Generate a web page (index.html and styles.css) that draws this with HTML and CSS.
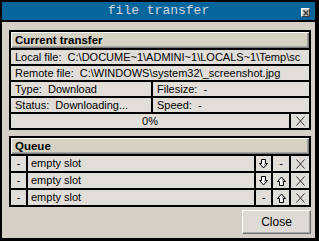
FILE: index.html
```html
<!DOCTYPE html>
<html>
<head>
<meta charset="utf-8">
<link rel="stylesheet" href="styles.css">
</head>
<body>
<div class="win">
  <div class="title">
    <span></span>
    <span class="title-text">file transfer</span>
    <span class="tclose"><svg width="6" height="6" viewBox="0 0 6 6"><path d="M.5 .5l5 5M5.5 .5l-5 5" stroke="#3a3a3a" stroke-width="1.5"/></svg></span>
  </div>
  <div class="body">
    <div class="panel cur">
      <div class="head">Current transfer</div>
      <div class="cell">Local file:  C:\DOCUME~1\ADMINI~1\LOCALS~1\Temp\sc</div>
      <div class="cell">Remote file:  C:\WINDOWS\system32\_screenshot.jpg</div>
      <div class="split">
        <div class="cell">Type:  Download</div>
        <div class="cell">Filesize:  -</div>
      </div>
      <div class="split">
        <div class="cell">Status:  Downloading...</div>
        <div class="cell">Speed:  -</div>
      </div>
      <div class="prog">
        <div class="cell center">0%</div>
        <div class="cell icon"><svg width="9" height="10" viewBox="0 0 9 10"><path d="M.5 .5l8 9M8.5 .5l-8 9" stroke="#333" stroke-width="1"/></svg></div>
      </div>
    </div>

    <div class="panel queue">
      <div class="head">Queue</div>
      <div class="qrow">
        <div class="cell icon">-</div>
        <div class="cell name">empty slot</div>
        <div class="cell icon"><svg width="9" height="10" viewBox="0 0 9 10"><path d="M2.5 .5h4v4h2l-4 4.5-4-4.5h2z" fill="#fff" stroke="#000"/><path d="M5.5 1.5v3.5h1.5l-2.5 2.8z" fill="#9c9c9c"/></svg></div>
        <div class="cell icon">-</div>
        <div class="cell icon"><svg width="9" height="10" viewBox="0 0 9 10"><path d="M.5 .5l8 9M8.5 .5l-8 9" stroke="#333" stroke-width="1"/></svg></div>
      </div>
      <div class="qrow">
        <div class="cell icon">-</div>
        <div class="cell name">empty slot</div>
        <div class="cell icon"><svg width="9" height="10" viewBox="0 0 9 10"><path d="M2.5 .5h4v4h2l-4 4.5-4-4.5h2z" fill="#fff" stroke="#000"/><path d="M5.5 1.5v3.5h1.5l-2.5 2.8z" fill="#9c9c9c"/></svg></div>
        <div class="cell icon"><svg width="9" height="10" viewBox="0 0 9 10"><path d="M2.5 9.5h4v-4h2l-4-4.5-4 4.5h2z" fill="#fff" stroke="#000"/><path d="M5.5 8.5v-3.5h1.5l-2.5-2.8z" fill="#9c9c9c"/></svg></div>
        <div class="cell icon"><svg width="9" height="10" viewBox="0 0 9 10"><path d="M.5 .5l8 9M8.5 .5l-8 9" stroke="#333" stroke-width="1"/></svg></div>
      </div>
      <div class="qrow">
        <div class="cell icon">-</div>
        <div class="cell name">empty slot</div>
        <div class="cell icon">-</div>
        <div class="cell icon"><svg width="9" height="10" viewBox="0 0 9 10"><path d="M2.5 9.5h4v-4h2l-4-4.5-4 4.5h2z" fill="#fff" stroke="#000"/><path d="M5.5 8.5v-3.5h1.5l-2.5-2.8z" fill="#9c9c9c"/></svg></div>
        <div class="cell icon"><svg width="9" height="10" viewBox="0 0 9 10"><path d="M.5 .5l8 9M8.5 .5l-8 9" stroke="#333" stroke-width="1"/></svg></div>
      </div>
    </div>

    <div class="foot">
      <button class="close">Close</button>
    </div>
  </div>
</div>
</body>
</html>
```

FILE: styles.css
```css
* { box-sizing: border-box; margin: 0; padding: 0; }
html, body { width: 319px; height: 241px; overflow: hidden; }
body {
  font-family: "Liberation Sans", Arial, sans-serif;
  font-size: 11px;
  color: #000;
  background: #d4d0c8;
}
.win {
  width: 319px;
  height: 241px;
  border-style: solid;
  border-color: #000;
  border-width: 2px 4px 3px 2px;
  background: #d4d0c8;
  display: flex;
  flex-direction: column;
}
.title {
  height: 20px;
  flex: none;
  background: #06659c;
  border-bottom: 2px solid #000;
  display: grid;
  grid-template-columns: 1fr auto 1fr;
}
.title-text {
  font-family: "Liberation Mono", monospace;
  font-size: 13px;
  line-height: 18px;
  color: #d2d6da;
}
.tclose {
  justify-self: end;
  align-self: start;
  margin: 6px 5px 0 0;
  width: 9px;
  height: 9px;
  background: #d4d0c8;
  border: 1px solid;
  border-color: #fff #404040 #404040 #fff;
  display: flex;
  align-items: center;
  justify-content: center;
}
.tclose svg { display: block; }
.body {
  flex: 1;
  padding: 8px 4px 4px 7px;
  display: flex;
  flex-direction: column;
}
.panel {
  background: #000;
  padding: 2px;
  display: grid;
  gap: 2px;
}
.cur { grid-template-rows: 16px repeat(5, 14px); }
.queue { margin-top: 6px; grid-template-rows: 16px repeat(3, 15px); }
.head {
  background: #d5d2c4;
  box-shadow: inset 1px 1px #fff, inset -1px -1px #7c7c7c, inset -2px -2px #a8a6a0;
  font-weight: bold;
  font-size: 11.5px;
  line-height: 16px;
  padding-left: 4px;
}
.cell {
  background: #e1ded9;
  padding-left: 4px;
  line-height: 14px;
  white-space: pre;
  overflow: hidden;
}
.queue .cell { line-height: 15px; }
.split {
  display: grid;
  grid-template-columns: 140px 1fr;
  gap: 2px;
}
.prog {
  display: grid;
  grid-template-columns: 1fr 18px;
  gap: 2px;
}
.center { text-align: center; padding-left: 0; }
.icon {
  padding: 0;
  display: flex;
  align-items: center;
  justify-content: center;
}
.icon svg { display: block; }
.qrow {
  display: grid;
  grid-template-columns: 15px 1fr 15px 16px 18px;
  gap: 2px;
}
.name { padding-left: 3px; }
.foot {
  margin-top: 3px;
  display: flex;
  justify-content: flex-end;
}
.close {
  width: 69px;
  height: 24px;
  font-family: "Liberation Sans", Arial, sans-serif;
  font-size: 12px;
  color: #000;
  background: #dedbd6;
  border: 1px solid;
  border-color: #fff #6f6f6f #6f6f6f #fff;
  box-shadow: inset -1px -1px #a9a7a2;
}
```
